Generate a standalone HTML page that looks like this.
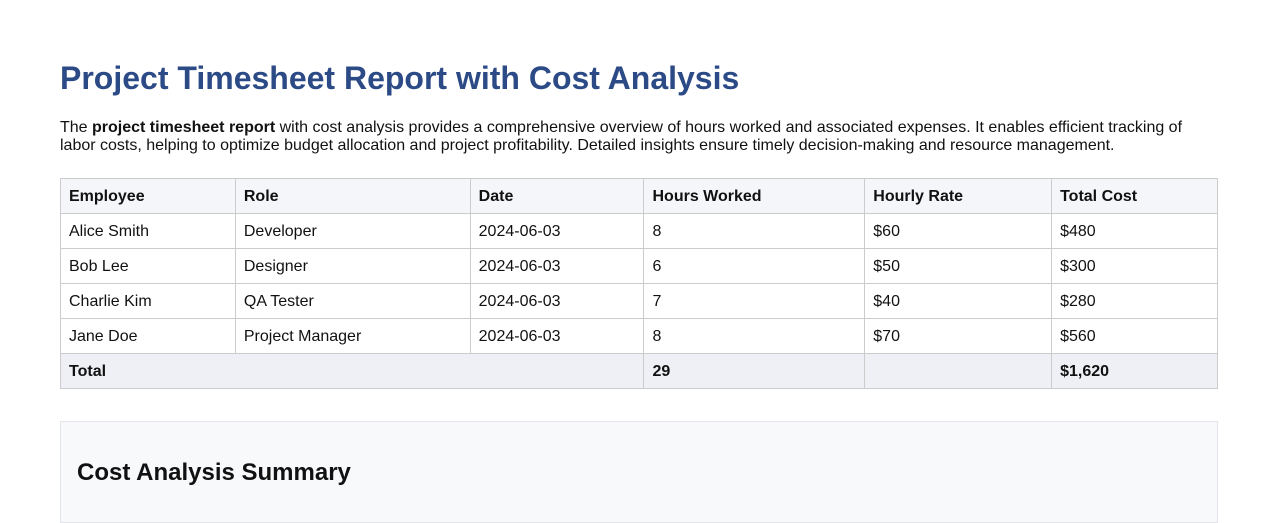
<!DOCTYPE html>
<html><head><style>
body{margin:0;background:#fff;font-family:"Liberation Sans",Arial,sans-serif;color:#111;}
.w{position:absolute;left:60px;top:0;width:1158px;}
h1{margin:0;position:absolute;top:60px;left:0;font-size:32px;color:#2b4a86;font-weight:bold;white-space:nowrap;}
p{position:absolute;top:119px;left:0;margin:0;font-size:16px;line-height:17.5px;width:1140px;}
table{position:absolute;top:178px;left:0;border-collapse:collapse;width:1158px;font-size:16px;}
td,th{border:1px solid #ccc;height:32px;padding:2px 8px 0;text-align:left;}
th{background:#f5f6fa;font-weight:bold;}
tr.t td{background:#eef0f6;font-weight:bold;}
.box{position:absolute;top:421px;left:0;width:1156px;height:100px;background:#f8f9fb;border:1px solid #e3e5ea;}
h2{position:absolute;top:459px;left:17px;margin:0;font-size:24px;font-weight:bold;}
</style></head><body><div class="w">
<h1>Project Timesheet Report with Cost Analysis</h1>
<p>The <b>project timesheet report</b> with cost analysis provides a comprehensive overview of hours worked and associated expenses. It enables efficient tracking of labor costs, helping to optimize budget allocation and project profitability. Detailed insights ensure timely decision-making and resource management.</p>
<table>
<colgroup><col style="width:175px"><col style="width:235px"><col style="width:174px"><col style="width:221px"><col style="width:187px"><col style="width:166px"></colgroup>
<tr><th>Employee</th><th>Role</th><th>Date</th><th>Hours Worked</th><th>Hourly Rate</th><th>Total Cost</th></tr>
<tr><td>Alice Smith</td><td>Developer</td><td>2024-06-03</td><td>8</td><td>$60</td><td>$480</td></tr>
<tr><td>Bob Lee</td><td>Designer</td><td>2024-06-03</td><td>6</td><td>$50</td><td>$300</td></tr>
<tr><td>Charlie Kim</td><td>QA Tester</td><td>2024-06-03</td><td>7</td><td>$40</td><td>$280</td></tr>
<tr><td>Jane Doe</td><td>Project Manager</td><td>2024-06-03</td><td>8</td><td>$70</td><td>$560</td></tr>
<tr class="t"><td colspan="3">Total</td><td>29</td><td></td><td>$1,620</td></tr>
</table>
<div class="box"></div>
<h2>Cost Analysis Summary</h2>
</div></body></html>
